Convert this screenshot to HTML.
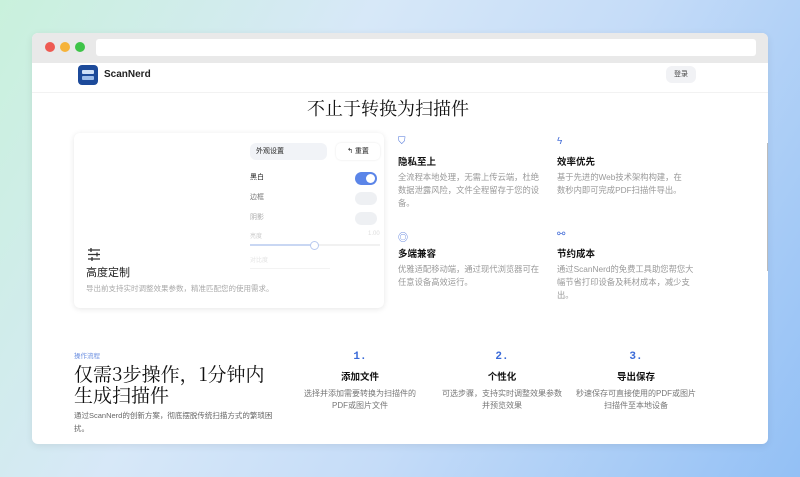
<!DOCTYPE html>
<html><head><meta charset="utf-8"><style>
*{margin:0;padding:0;box-sizing:border-box}
body{width:800px;height:477px;overflow:hidden;font-family:"Liberation Sans","Noto Sans CJK SC",sans-serif;background:linear-gradient(120deg,#c9f1dc 0%,#d7e8f8 35%,#c5dcf8 60%,#93c0f5 100%);position:relative;color:#222}
.win{position:absolute;left:32px;top:33px;width:736px;height:411px;background:#fff;border-radius:6px;overflow:hidden;box-shadow:0 2px 8px rgba(0,0,0,.08)}
.bar{height:30px;background:#e9e9e9;position:relative}
.dot{position:absolute;top:9px;width:10px;height:10px;border-radius:50%}
.addr{position:absolute;left:64px;top:6px;width:660px;height:17px;background:#fff;border-radius:3px}
.a{position:absolute}
.t{font-size:8.3px;color:#999;line-height:13px}
.h{font-size:9.5px;font-weight:bold;color:#111}
.tog{position:absolute;width:22px;height:13px;border-radius:7px;background:#eef0f3}
.tog.on{background:#5b85e8}
.tog.on::after{content:"";position:absolute;right:2px;top:2px;width:9px;height:9px;border-radius:50%;background:#fff}
.st{font-size:8px;color:#777;line-height:12px}
.num{color:#3a6ad8;font-family:'Liberation Mono',monospace;font-size:11px;font-weight:bold}
</style></head><body>
<div class="win">
 <div class="bar">
  <div class="dot" style="left:13px;background:#ee5a52"></div>
  <div class="dot" style="left:28px;background:#f6b33a"></div>
  <div class="dot" style="left:43px;background:#3ec448"></div>
  <div class="addr"></div>
 </div>
 <div class="a" style="left:0;top:30px;width:736px;height:30px;border-bottom:1px solid #f2f2f2"></div>
 <div class="a" style="left:46px;top:32px;width:20px;height:20px;background:#1c4a9a;border-radius:4px">
  <div style="position:absolute;left:4px;top:5px;width:12px;height:4px;background:#cfe0f7;border-radius:1px"></div>
  <div style="position:absolute;left:4px;top:11px;width:12px;height:4px;background:#9dbdea;border-radius:1px"></div>
 </div>
 <div class="a" style="left:72px;top:36px;font-size:10px;font-weight:bold;color:#222">ScanNerd</div>
 <div class="a" style="left:634px;top:33px;width:30px;height:17px;background:#f1f2f5;border-radius:6px;font-size:7px;text-align:center;line-height:17px;color:#444">登录</div>
 <div class="a" style="left:-12px;top:62px;width:736px;text-align:center;font-family:'Noto Serif CJK SC',serif;font-size:18px;color:#111">不止于转换为扫描件</div>

 <div class="a" style="left:42px;top:100px;width:310px;height:175px;border-radius:6px;box-shadow:0 1px 6px rgba(0,0,0,.1);background:#fff">
  <div class="a" style="left:176px;top:10px;width:77px;height:17px;background:#f1f3f7;border-radius:6px;font-size:7px;line-height:17px;padding-left:6px">外观设置</div>
  <div class="a" style="left:262px;top:10px;width:44px;height:17px;border-radius:5px;font-size:7px;line-height:17px;text-align:center;box-shadow:0 0 2px rgba(0,0,0,.1)">↰ 重置</div>
  <div class="a" style="left:176px;top:39px;font-size:7px">黑白</div><div class="tog on" style="left:281px;top:39px"></div>
  <div class="a" style="left:176px;top:59px;font-size:7px;color:#777">边框</div><div class="tog" style="left:281px;top:59px"></div>
  <div class="a" style="left:176px;top:79px;font-size:7px;color:#aaa">阴影</div><div class="tog" style="left:281px;top:79px"></div>
  <div class="a" style="left:176px;top:98px;font-size:6px;color:#ccc">亮度</div><div class="a" style="left:294px;top:98px;font-size:6px;color:#ddd">1.00</div>
  <div class="a" style="left:176px;top:111px;width:130px;height:2px;background:#f1f1f1"></div>
  <div class="a" style="left:176px;top:111px;width:64px;height:2px;background:#c9d7f3"></div>
  <div class="a" style="left:236px;top:108px;width:9px;height:9px;border-radius:50%;border:1px solid #b8c9ef;background:#fff"></div>
  <div class="a" style="left:176px;top:122px;font-size:6px;color:#e3e3e3">对比度</div>
  <div class="a" style="left:176px;top:135px;width:80px;height:1px;background:#f3f3f3"></div>
  <svg class="a" style="left:13px;top:115px" width="14" height="13" viewBox="0 0 14 13" stroke="#333" stroke-width="1.3"><path d="M1 2h12M1 6.5h12M1 11h12"/><path d="M4 0v4M10 4.5v4M5 9v4" /></svg>
  <div class="a" style="left:12px;top:131px;font-size:11px;color:#222">高度定制</div>
  <div class="a" style="left:12px;top:150px;font-size:7.5px;color:#aaa">导出前支持实时调整效果参数，精准匹配您的使用需求。</div>
 </div>

 <div class="a" style="left:366px;top:103px;color:#4a72d9;font-size:10px">⛉</div>
 <div class="a h" style="left:366px;top:121px">隐私至上</div>
 <div class="a t" style="left:366px;top:138px;width:145px">全流程本地处理，无需上传云端，杜绝数据泄露风险，文件全程留存于您的设备。</div>
 <div class="a" style="left:525px;top:103px;color:#4a72d9;font-size:10px">ϟ</div>
 <div class="a h" style="left:525px;top:121px">效率优先</div>
 <div class="a t" style="left:525px;top:138px;width:130px">基于先进的Web技术架构构建，在数秒内即可完成PDF扫描件导出。</div>
 <div class="a" style="left:366px;top:196px;color:#4a72d9;font-size:10px">◎</div>
 <div class="a h" style="left:366px;top:213px">多端兼容</div>
 <div class="a t" style="left:366px;top:230px;width:145px">优雅适配移动端，通过现代浏览器可在任意设备高效运行。</div>
 <div class="a" style="left:525px;top:196px;color:#4a72d9;font-size:10px">⚯</div>
 <div class="a h" style="left:525px;top:213px">节约成本</div>
 <div class="a t" style="left:525px;top:230px;width:138px">通过ScanNerd的免费工具助您帮您大幅节省打印设备及耗材成本，减少支出。</div>
 <div class="a" style="left:735px;top:110px;width:1px;height:128px;background:#bbb"></div>

 <div class="a" style="left:42px;top:317px;font-size:6.5px;color:#6a8ee0">操作流程</div>
 <div class="a" style="left:42px;top:330px;font-family:'Noto Serif CJK SC',serif;font-size:19px;line-height:21px;color:#111;width:200px">仅需3步操作，1分钟内生成扫描件</div>
 <div class="a" style="left:42px;top:376px;width:205px;font-size:7.5px;line-height:13px;color:#666">通过ScanNerd的创新方案，彻底摆脱传统扫描方式的繁琐困扰。</div>

 <div class="a" style="left:263px;top:318px;width:130px;text-align:center">
  <div class="num">1.</div>
  <div class="h" style="margin-top:6px">添加文件</div>
  <div class="st" style="margin-top:5px">选择并添加需要转换为扫描件的<br>PDF或图片文件</div></div>
 <div class="a" style="left:405px;top:318px;width:130px;text-align:center">
  <div class="num">2.</div>
  <div class="h" style="margin-top:6px">个性化</div>
  <div class="st" style="margin-top:5px">可选步骤，支持实时调整效果参数<br>并预览效果</div></div>
 <div class="a" style="left:534px;top:318px;width:140px;text-align:center">
  <div class="num">3.</div>
  <div class="h" style="margin-top:6px">导出保存</div>
  <div class="st" style="margin-top:5px">秒速保存可直接使用的PDF或图片<br>扫描件至本地设备</div></div>
</div>
</body></html>
